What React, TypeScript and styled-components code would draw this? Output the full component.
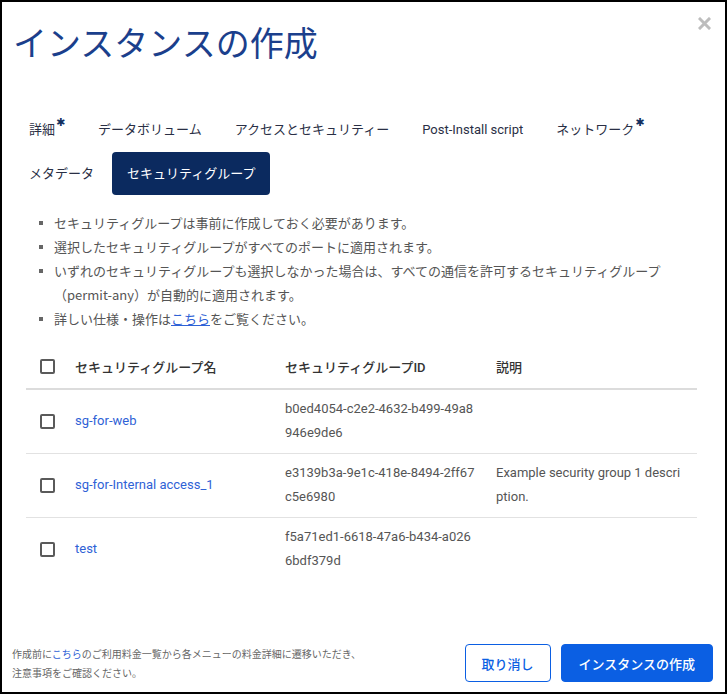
import React from "react"
import styled, { createGlobalStyle } from "styled-components"

const GlobalStyle = createGlobalStyle`
  html, body {
    margin: 0;
    padding: 0;
    background: #fff;
  }
  body {
    font-family: Roboto, "Noto Sans CJK JP", sans-serif;
    color: #333;
  }
  * {
    box-sizing: border-box;
  }
`

const Frame = styled.div`
  position: relative;
  width: 727px;
  height: 694px;
  border: 2px solid #000;
  display: flex;
  flex-direction: column;
  background: #fff;
`

const Title = styled.h1`
  margin: 20px 0 0 11px;
  font-family: "Noto Sans CJK JP", sans-serif;
  font-size: 34px;
  font-weight: 400;
  line-height: 40px;
  color: #1b3f8c;
`

const Close = styled.button`
  position: absolute;
  top: 12px;
  right: 12px;
  width: 18px;
  height: 18px;
  padding: 0;
  border: none;
  background: none;
  display: flex;
  align-items: center;
  justify-content: center;
  cursor: pointer;
`

const Tabs = styled.div`
  display: flex;
  flex-wrap: wrap;
  column-gap: 3px;
  row-gap: 1px;
  margin: 46px 40px 0 12px;
`

const Tab = styled.div<{ $active?: boolean }>`
  height: 43px;
  padding: 0 15px;
  display: flex;
  align-items: center;
  font-family: Roboto, "Noto Sans CJK JP", sans-serif;
  font-size: 13px;
  line-height: 20px;
  color: ${(p) => (p.$active ? "#fff" : "#2a2f45")};
  background: ${(p) => (p.$active ? "#0b2a5f" : "transparent")};
  border-radius: 4px;
  white-space: nowrap;
`

const Required = styled.span`
  display: inline-block;
  width: 9px;
  margin-left: 1px;
  align-self: flex-start;
  margin-top: 9px;
  color: #12305f;
  font-family: "DejaVu Sans", sans-serif;
  font-size: 11px;
  line-height: 12px;
`

const Notes = styled.ul`
  list-style: none;
  margin: 16px 0 0 0;
  padding: 0 20px 0 52px;
`

const Note = styled.li`
  position: relative;
  font-family: "Noto Sans CJK JP", sans-serif;
  font-size: 13px;
  line-height: 24px;
  color: #555;

  &::before {
    content: "";
    position: absolute;
    left: -15px;
    top: 10px;
    width: 4px;
    height: 4px;
    background: #666;
  }
`

const Link = styled.a`
  color: #2f62d6;
  text-decoration: underline;
`

const Table = styled.table`
  margin: 14px 0 0 24px;
  width: 671px;
  border-collapse: collapse;
  table-layout: fixed;
  font-size: 13px;
`

const Th = styled.th<{ $w?: number }>`
  width: ${(p) => (p.$w ? `${p.$w}px` : "auto")};
  height: 44px;
  padding: 0 8px 0 12px;
  text-align: left;
  font-weight: 500;
  color: #333;
  border-bottom: 2px solid #dcdcdc;
  font-family: Roboto, "Noto Sans CJK JP", sans-serif;
`

const Row = styled.tr`
  & + & td {
    border-top: 1px solid #e2e2e2;
  }
`

const Td = styled.td<{ $link?: boolean }>`
  height: 64px;
  padding: 6px 8px 6px 12px;
  vertical-align: middle;
  line-height: 24px;
  color: ${(p) => (p.$link ? "#2f62d6" : "#555")};
  word-break: break-all;
  font-family: Roboto, "Noto Sans CJK JP", sans-serif;

  &:last-child {
    padding-right: 14px;
  }
`

const Check = styled.span`
  display: block;
  width: 15px;
  height: 15px;
  margin-left: 2px;
  border: 2px solid #5a5a5a;
  border-radius: 2px;
`

const Footer = styled.div`
  margin-top: auto;
  display: flex;
  align-items: center;
  justify-content: space-between;
  padding: 0 12px 10px 10px;
`

const FooterNote = styled.p`
  margin: 0;
  font-family: "Noto Sans CJK JP", sans-serif;
  font-size: 10px;
  line-height: 19px;
  color: #666;

  a {
    color: #2f62d6;
    text-decoration: none;
  }
`

const Buttons = styled.div`
  display: flex;
  gap: 10px;
`

const Button = styled.button<{ $primary?: boolean }>`
  height: 38px;
  padding: 0 ${(p) => (p.$primary ? 17 : 16)}px;
  border-radius: 4px;
  border: 1px solid #0b5fe3;
  background: ${(p) => (p.$primary ? "#0b5fe3" : "#fff")};
  color: ${(p) => (p.$primary ? "#fff" : "#0b5fe3")};
  font-family: "Noto Sans CJK JP", sans-serif;
  font-size: 13px;
  font-weight: 500;
  cursor: pointer;
`

const groups = [
  { name: "sg-for-web", id: "b0ed4054-c2e2-4632-b499-49a8946e9de6", desc: "" },
  {
    name: "sg-for-Internal access_1",
    id: "e3139b3a-9e1c-418e-8494-2ff67c5e6980",
    desc: "Example security group 1 description.",
  },
  { name: "test", id: "f5a71ed1-6618-47a6-b434-a0266bdf379d", desc: "" },
]

export default function App() {
  return (
    <>
      <GlobalStyle />
      <Frame>
        <Title>インスタンスの作成</Title>
        <Close aria-label="close">
          <svg width="13" height="13" viewBox="0 0 13 13">
            <path d="M2 2 L11 11 M11 2 L2 11" stroke="#bdbdbd" strokeWidth="3" strokeLinecap="square" />
          </svg>
        </Close>

        <Tabs>
          <Tab>
            詳細<Required>✱</Required>
          </Tab>
          <Tab>データボリューム</Tab>
          <Tab>アクセスとセキュリティー</Tab>
          <Tab>Post-Install script</Tab>
          <Tab>
            ネットワーク<Required>✱</Required>
          </Tab>
          <Tab>メタデータ</Tab>
          <Tab $active>セキュリティグループ</Tab>
        </Tabs>

        <Notes>
          <Note>セキュリティグループは事前に作成しておく必要があります。</Note>
          <Note>選択したセキュリティグループがすべてのポートに適用されます。</Note>
          <Note>
            いずれのセキュリティグループも選択しなかった場合は、すべての通信を許可するセキュリティグループ（permit-any）が自動的に適用されます。
          </Note>
          <Note>
            詳しい仕様・操作は<Link href="#">こちら</Link>をご覧ください。
          </Note>
        </Notes>

        <Table>
          <thead>
            <tr>
              <Th $w={37}>
                <Check />
              </Th>
              <Th $w={210}>セキュリティグループ名</Th>
              <Th $w={211}>セキュリティグループID</Th>
              <Th>説明</Th>
            </tr>
          </thead>
          <tbody>
            {groups.map((g) => (
              <Row key={g.id}>
                <Td>
                  <Check />
                </Td>
                <Td $link>{g.name}</Td>
                <Td>{g.id}</Td>
                <Td>{g.desc}</Td>
              </Row>
            ))}
          </tbody>
        </Table>

        <Footer>
          <FooterNote>
            作成前に<a href="#">こちら</a>のご利用料金一覧から各メニューの料金詳細に遷移いただき、
            <br />
            注意事項をご確認ください。
          </FooterNote>
          <Buttons>
            <Button>取り消し</Button>
            <Button $primary>インスタンスの作成</Button>
          </Buttons>
        </Footer>
      </Frame>
    </>
  )
}
